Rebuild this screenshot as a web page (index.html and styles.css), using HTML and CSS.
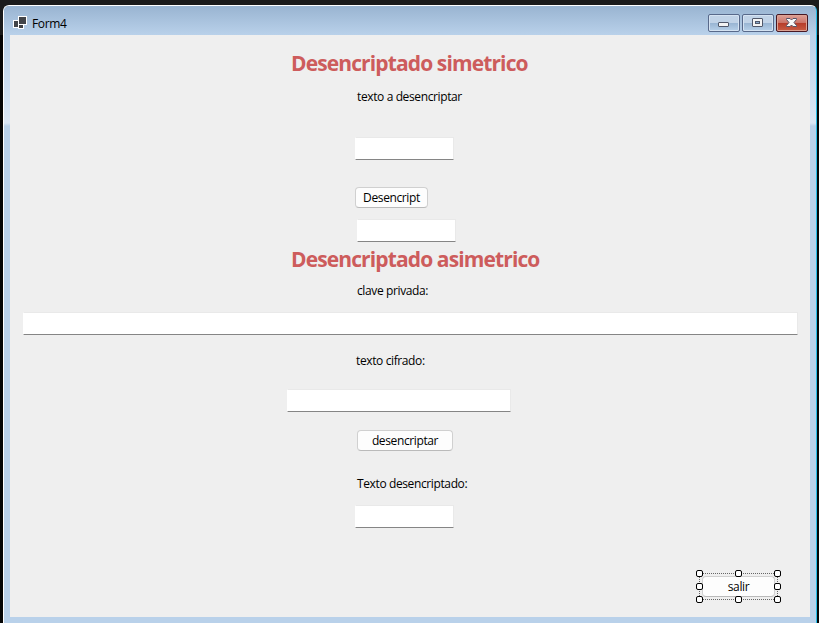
FILE: index.html
```
<!DOCTYPE html>
<html lang="es">
<head>
<meta charset="utf-8">
<title>Form4</title>
<link rel="stylesheet" href="styles.css">
</head>
<body>
<div class="window">
  <header class="titlebar">
    <svg class="app-icon" width="14" height="14" viewBox="0 0 14 14" shape-rendering="crispEdges">
      <path fill="#fff" d="M5 0h9v9h-3v4H5v-1H0V4h5z"/>
      <path fill="#424448" d="M6 1h7v7H6zM1 5h4v6H1zM6 9h4v3H6z"/>
    </svg>
    <span class="title">Form4</span>
    <div class="controls">
      <button class="control" aria-label="Minimizar"><svg width="32" height="18" viewBox="0 0 32 18"><rect x="10.5" y="8.5" width="10" height="4" rx=".5" fill="#f4f4f4" stroke="#51586a"/></svg></button>
      <button class="control" aria-label="Maximizar"><svg width="32" height="18" viewBox="0 0 32 18"><rect x="10.5" y="4.5" width="10" height="8" rx=".5" fill="#f4f4f4" stroke="#51586a"/><rect x="13.5" y="7.5" width="4" height="2" fill="#86a8cb" stroke="#51586a"/></svg></button>
      <button class="control close" aria-label="Cerrar"><svg width="32" height="18" viewBox="0 0 32 18"><path d="M10.500 4.500h3.500l1.500 1.500 1.500-1.500h3.500v1l-2.500 3 2.500 3v1h-3.500l-1.500-1.500-1.500 1.500h-3.500v-1l2.500-3-2.500-3z" fill="#f8f8f8" stroke="#575467"/></svg></button>
    </div>
  </header>
  <main class="client">
    <h1 class="heading symmetric">Desencriptado simetrico</h1>
    <label class="label source-label" for="source">texto a desencriptar</label>
    <input class="field source" id="source">
    <button class="button decrypt">Desencript</button>
    <input class="field result" aria-label="Resultado">
    <h1 class="heading asymmetric">Desencriptado asimetrico</h1>
    <label class="label key-label" for="key">clave privada:</label>
    <input class="field key" id="key">
    <label class="label cipher-label" for="cipher">texto cifrado:</label>
    <input class="field cipher" id="cipher">
    <button class="button decrypt-key">desencriptar</button>
    <label class="label plain-label" for="plain">Texto desencriptado:</label>
    <input class="field plain" id="plain">
    <div class="selection">
      <button class="button exit">salir</button>
      <i class="handle nw"></i><i class="handle n"></i><i class="handle ne"></i>
      <i class="handle w"></i><i class="handle e"></i>
      <i class="handle sw"></i><i class="handle s"></i><i class="handle se"></i>
    </div>
  </main>
</div>
</body>
</html>
```
FILE: styles.css
```
* { box-sizing: border-box; }
body {
  margin: 0;
  height: 623px;
  padding: 5px 2px 0 3px;
  overflow: hidden;
  background: linear-gradient(#1b1b1b 35px, #050505 35px);
  font: 12px/16px "Open Sans", "Noto Sans", sans-serif;
  letter-spacing: -.38px;
  color: #000;
}
.window {
  height: 618px;
  padding: 0 6px 6px;
  border: solid #fff;
  border-width: 1px 1px 0;
  border-right-color: #25bde8;
  border-radius: 6px 6px 0 0;
  background: linear-gradient(#99b4d1 0, #b9d1ea 29px, #dbe7f5 117px, #b9d1ea 120px);
}
.titlebar {
  display: flex;
  height: 29px;
  margin: 0 -6px;
  padding: 0 8px 0 9px;
  border-radius: 5px 5px 0 0;
  background: linear-gradient(#99b4d1, #b9d1ea);
}
.app-icon { margin-top: 10px; }
.title { margin: 10px 0 0 5px; }
.controls { display: flex; gap: 2px; margin: 8px 0 0 auto; }
.control {
  width: 32px;
  height: 18px;
  padding: 0;
  border: 1px solid #58698a;
  border-radius: 2px;
  background: linear-gradient(#c1d3e7 0 48%, #98b4d2 50%, #b7d0e9);
  box-shadow: inset 0 0 0 1px #d5e3f2;
}
.control svg { display: block; margin: -1px; }
.close {
  border-color: #481823;
  background: linear-gradient(#dea197 0, #cb7469 48%, #b63b29 50%, #c85d45);
  box-shadow: inset 0 0 0 1px #dda293;
}
.client {
  display: flex;
  flex-direction: column;
  align-items: flex-start;
  height: 582px;
  padding-top: 14px;
  background: #efefef;
}
.heading {
  margin: 0 0 0 281px;
  font: 700 21px/28px "Open Sans", "Noto Sans", sans-serif;
  letter-spacing: -.88px;
  color: #cd5c5c;
  white-space: nowrap;
}
.label { white-space: nowrap; }
.field {
  width: 99px;
  height: 23px;
  padding: 2px 4px;
  border: 1px solid #e9e9e9;
  border-bottom-color: #858585;
  border-left-color: #fff;
  border-radius: 1px;
  background: #fff;
  font: inherit;
}
.button {
  height: 21px;
  padding: 0;
  border: 1px solid #d0d0d0;
  border-bottom-color: #bababa;
  border-radius: 4px;
  background: #fdfdfd;
  color: #000;
  font: inherit;
  letter-spacing: inherit;
  line-height: 18px;
  white-space: nowrap;
}
.source-label { margin: 12px 0 0 347px; }
.source { margin: 32px 0 0 345px; }
.decrypt { width: 73px; margin: 27px 0 0 345px; }
.result { margin: 11px 0 0 347px; }
.asymmetric { margin-top: 3px; }
.key-label { margin: 10px 0 0 347px; }
.key { width: 775px; margin: 13px 0 0 13px; }
.cipher-label { margin: 18px 0 0 346px; }
.cipher { width: 224px; margin: 20px 0 0 277px; }
.decrypt-key { width: 96px; margin: 18px 0 0 347px; }
.plain-label { margin: 25px 0 0 347px; }
.plain { margin: 13px 0 0 345px; }
.selection {
  position: relative;
  width: 79px;
  height: 27px;
  margin: 45px 0 0 689px;
  padding: 2px;
  border: 1px dotted #666;
}
.exit { display: block; width: 73px; }
.handle {
  position: absolute;
  width: 7px;
  height: 7px;
  border: 1px solid #000;
  border-radius: 2px;
  background: #fff;
}
.nw, .w, .sw { left: -4px; }
.n, .s { left: 35px; }
.ne, .e, .se { right: -4px; }
.nw, .n, .ne { top: -4px; }
.w, .e { top: 9px; }
.sw, .s, .se { bottom: -4px; }
```
